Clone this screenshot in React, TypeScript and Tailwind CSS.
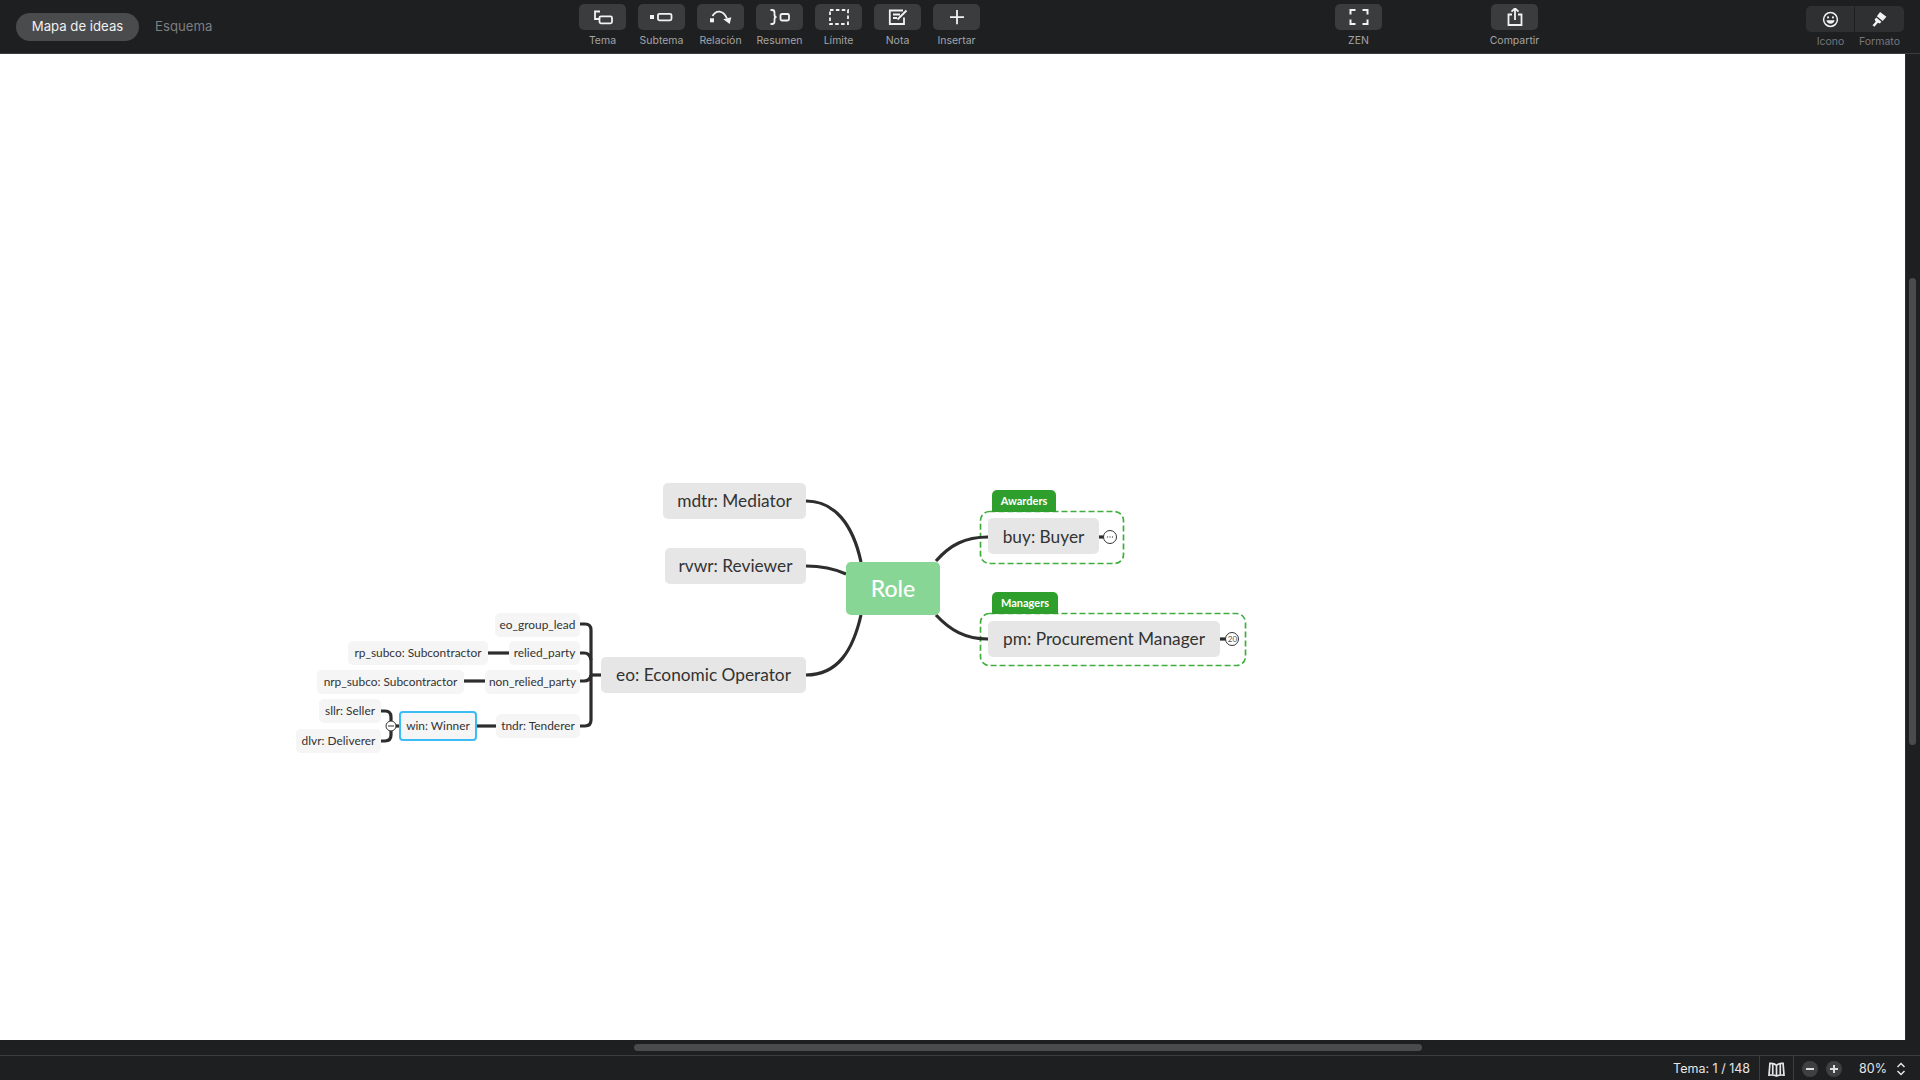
import React from 'react'

const tools = [
  {
    label: 'Tema',
    icon: (
      <>
        <path d="M7 2H2V9.500H6" />
        <rect x="6.500" y="6.800" width="12.500" height="7" rx="1.500" />
      </>
    ),
  },
  {
    label: 'Subtema',
    icon: (
      <>
        <rect x="-2" y="5.500" width="4" height="4" fill="currentColor" stroke="none" />
        <rect x="6" y="4.300" width="13.500" height="6.500" rx="1.500" />
      </>
    ),
  },
  {
    label: 'Relación',
    icon: (
      <>
        <rect x="-1" y="8.800" width="4" height="4" fill="currentColor" stroke="none" />
        <path d="M1.500 6.500C5 0.500 12 0 16 9" />
        <path d="M12.300 9.800L20.300 7.800L18.700 14.500Z" fill="currentColor" stroke="none" />
      </>
    ),
  },
  {
    label: 'Resumen',
    icon: (
      <>
        <path d="M0.500 0.500H2Q4.500 0.500 4.500 3V5.500Q4.500 7.500 6.500 7.500Q4.500 7.500 4.500 9.500V12Q4.500 14.500 2 14.500H0.500" />
        <rect x="10.500" y="4.500" width="8.500" height="6.500" rx="1.500" />
      </>
    ),
  },
  {
    label: 'Límite',
    icon: <rect x="1" y="0.500" width="18" height="14" strokeDasharray="3.500 2.400" />,
  },
  {
    label: 'Nota',
    icon: (
      <>
        <path d="M16 8V14.500H1.800V1H15" />
        <path d="M5 5H12M5 8.500H9M9.500 10L18.500 1" />
      </>
    ),
  },
  {
    label: 'Insertar',
    icon: <path d="M10 0.500V14.800M3 7.600H17" />,
  },
]

function ToolButton({ label, children }: { label: string; children: React.ReactNode }) {
  return (
    <div className="flex w-[59px] flex-col items-center">
      <button className="flex h-[26px] w-[47px] items-center justify-center rounded-[5px] bg-[#3b3c3e] text-[#f2f2f2]">
        <svg width="26" height="18" viewBox="-3 -1.500 26 18" fill="none" stroke="currentColor" strokeWidth="1.800">
          {children}
        </svg>
      </button>
      <span className="mt-[4px] text-[10.500px] leading-[14px] text-[#a3a4a5]">{label}</span>
    </div>
  )
}

function Toolbar() {
  return (
    <header className="flex h-[54px] shrink-0 border-b border-[#3c3d3f] bg-[#1e1f21] pt-[4px] font-['Inter',sans-serif]">
      <div className="flex w-[573px] shrink-0 items-start gap-4 pl-4 pt-[9px] text-[13.200px]">
        <div className="flex h-[28px] w-[123px] items-center justify-center rounded-full bg-[#4a4b4d] text-[#f0f0f0]">
          Mapa de ideas
        </div>
        <div className="flex h-[28px] items-center text-[#7d7e80]">Esquema</div>
      </div>
      {tools.map((t) => (
        <ToolButton key={t.label} label={t.label}>
          {t.icon}
        </ToolButton>
      ))}
      <div className="ml-[343px]">
        <ToolButton label="ZEN">
          <path d="M1.500 5V0.500H6.500M13.500 0.500H18.500V5M18.500 10V14.500H13.500M6.500 14.500H1.500V10" strokeWidth="2" />
        </ToolButton>
      </div>
      <div className="ml-[97px]">
        <ToolButton label="Compartir">
          <path d="M7 5H3.500V15.500H16.500V5H13M10 10.500V-1M6.500 2.200L10 -1.200L13.500 2.200" />
        </ToolButton>
      </div>
      <div className="ml-[262px] mt-[2px] flex w-[98px] flex-col">
        <div className="flex h-[26px] rounded-[5px] bg-[#2f3032] text-[#f2f2f2]">
          <div className="flex w-[49px] items-center justify-center border-r border-[#1e1f21]">
            <svg width="17" height="17" viewBox="0 0 16 16" fill="none" stroke="currentColor" strokeWidth="1.400">
              <circle cx="8" cy="8" r="6.500" />
              <circle cx="5.700" cy="6" r="1" fill="currentColor" stroke="none" />
              <circle cx="10.300" cy="6" r="1" fill="currentColor" stroke="none" />
              <path d="M4.200 8.800H11.800C11.600 11 10 12 8 12C6 12 4.400 11 4.200 8.800Z" fill="currentColor" stroke="none" />
            </svg>
          </div>
          <div className="flex w-[49px] items-center justify-center">
            <svg width="17" height="17" viewBox="0 0 16 16" fill="currentColor">
              <path d="M8.500 1L14.500 5.500L11 9.500L5.500 5Z" />
              <path d="M5 6.200L9.800 10.200L8.400 11.800L6.500 11L3.200 14.800L1.400 13.400L4.400 10L3.400 8Z" />
            </svg>
          </div>
        </div>
        <div className="mt-[3px] flex text-[10.500px] leading-[14px] text-[#77787a]">
          <span className="w-[49px] text-center">Icono</span>
          <span className="w-[49px] whitespace-nowrap text-center">Formato</span>
        </div>
      </div>
    </header>
  )
}

function Connectors() {
  return (
    <svg className="absolute inset-0" width="1905" height="986" viewBox="0 54 1905 986" fill="none">
      <g stroke="#3fae3f" strokeWidth="1.700" strokeDasharray="6 3">
        <rect x="980.500" y="511.500" width="143" height="52" rx="9" />
        <rect x="980.500" y="613.500" width="265" height="52" rx="9" />
      </g>
      <g stroke="#2d2d2d" strokeWidth="3.200">
        <path d="M806 501C835 501 853 525 861 562" />
        <path d="M806 566C822 566 835 569 846 574" />
        <path d="M806 675C838 675 853 650 861 615" />
        <path d="M936 561C950 545 965 537 988 537" />
        <path d="M936 615C950 630 965 639 988 639" />
        <path d="M1099 537H1104" />
        <path d="M1220 639H1226" />
        <path d="M580 624H585Q591 624 591 630V720Q591 726 585 726H580" />
        <path d="M580 653H584Q590 653 591 660" />
        <path d="M580 681H584Q590 681 591 675" />
        <path d="M591 675H601" />
        <path d="M488 653H509" />
        <path d="M464 681H485" />
        <path d="M477 726H496" />
        <path d="M381 711H385Q391 711 391 717V735Q391 741 385 741H381" />
        <path d="M391 726H399" />
      </g>
      <g stroke="#333" strokeWidth="1" fill="#fff">
        <circle cx="1110" cy="537" r="6.500" />
        <circle cx="1232" cy="639" r="6.500" />
        <circle cx="391" cy="726" r="5" />
      </g>
      <path d="M388 726H394" stroke="#333" strokeWidth="1" />
      <g fill="#555">
        <circle cx="1107.500" cy="537" r="0.700" />
        <circle cx="1110" cy="537" r="0.700" />
        <circle cx="1112.500" cy="537" r="0.700" />
      </g>
    </svg>
  )
}

function MindMap() {
  const big = 'absolute flex h-[36px] items-center justify-center rounded-[5px] bg-[#e6e6e6] text-[17.300px]'
  const small = 'absolute flex h-[24px] items-center justify-center rounded-[5px] bg-[#f5f5f5] text-[11.900px]'
  const tag = 'absolute flex h-[22px] items-center justify-center rounded-t-[5px] bg-[#2e9f2c] text-[11px] font-bold text-white'

  return (
    <div className="relative min-h-0 flex-1 overflow-hidden bg-white font-['Lato',sans-serif] text-[#333333]">
      <Connectors />
      <div className={`${big} left-[663px] top-[429px] w-[143px]`}>mdtr: Mediator</div>
      <div className={`${big} left-[665px] top-[494px] w-[141px]`}>rvwr: Reviewer</div>
      <div className={`${big} left-[601px] top-[603px] w-[205px]`}>eo: Economic Operator</div>
      <div className={`${big} left-[988px] top-[464px] w-[111px] pt-[1px]`}>buy: Buyer</div>
      <div className={`${big} left-[988px] top-[567px] w-[232px]`}>pm: Procurement Manager</div>
      <div className="absolute left-[846px] top-[508px] flex h-[53px] w-[94px] items-center justify-center rounded-[5px] bg-[#88d695] pb-[1px] text-[23px] font-medium text-white">
        Role
      </div>
      <div className={`${tag} left-[992px] top-[436px] w-[64px]`}>Awarders</div>
      <div className={`${tag} left-[992px] top-[538px] w-[66px]`}>Managers</div>
      <div className={`${small} left-[495px] top-[559px] w-[85px]`}>eo_group_lead</div>
      <div className={`${small} left-[509px] top-[587px] w-[71px]`}>relied_party</div>
      <div className={`${small} left-[348px] top-[587px] w-[140px]`}>rp_subco: Subcontractor</div>
      <div className={`${small} left-[485px] top-[616px] w-[95px]`}>non_relied_party</div>
      <div className={`${small} left-[317px] top-[616px] w-[147px]`}>nrp_subco: Subcontractor</div>
      <div className={`${small} left-[496px] top-[660px] w-[84px]`}>tndr: Tenderer</div>
      <div className={`${small} left-[319px] top-[645px] w-[62px]`}>sllr: Seller</div>
      <div className={`${small} left-[296px] top-[675px] w-[85px]`}>dlvr: Deliverer</div>
      <div className="absolute left-[399px] top-[657px] flex h-[30px] w-[78px] items-center justify-center rounded-[4px] border-2 border-[#3bbcf5] bg-[#f5f5f5] text-[11.900px]">
        win: Winner
      </div>
      <div className="absolute left-[1226px] top-[578px] flex h-[13px] w-[13px] items-center justify-center text-[8px] text-[#555555]">
        20
      </div>
    </div>
  )
}

function StatusBar() {
  return (
    <footer className="flex h-[25px] shrink-0 items-center border-t border-[#3c3d3f] bg-[#1e1f21] font-['Inter',sans-serif] text-[12.500px] text-[#e6e6e6]">
      <span className="ml-auto mt-[2px] pr-[9px]">Tema: 1 / 148</span>
      <div className="flex h-full w-[35px] items-center justify-center border-x border-[#3c3d3f] pt-[2px]">
        <svg width="17" height="15" viewBox="0 0 18 16" fill="none" stroke="currentColor" strokeWidth="1.800">
          <path d="M9 3.500C7.500 2 5 1.300 2 1.500L1 14C4 13.700 7 14 9 15C11 14 14 13.700 17 14L16 1.500C13 1.300 10.500 2 9 3.500V15" />
          <path d="M5 2V13.500M13 2V13.500" />
        </svg>
      </div>
      <div className="ml-[8px] mt-[2px] flex w-[40px] justify-between">
        <span className="flex h-[16px] w-[16px] items-center justify-center rounded-full bg-[#3f4042]">
          <span className="h-[2px] w-[8px] bg-[#dddddd]" />
        </span>
        <span className="relative flex h-[16px] w-[16px] items-center justify-center rounded-full bg-[#3f4042]">
          <span className="h-[2px] w-[8px] bg-[#dddddd]" />
          <span className="absolute h-[8px] w-[2px] bg-[#dddddd]" />
        </span>
      </div>
      <span className="ml-[17px] mt-[2px]">80%</span>
      <svg className="ml-[9px] mr-[14px] mt-[2px]" width="10" height="14" viewBox="0 0 10 14" fill="none" stroke="currentColor" strokeWidth="1.500">
        <path d="M1.500 5L5 1.500L8.500 5M1.500 9L5 12.500L8.500 9" />
      </svg>
    </footer>
  )
}

export default function App() {
  return (
    <div className="flex h-[1080px] w-[1920px] flex-col overflow-hidden bg-[#1e1f21]">
      <Toolbar />
      <div className="flex min-h-0 flex-1">
        <div className="flex min-w-0 flex-1 flex-col">
          <MindMap />
        </div>
        <div className="w-[15px] shrink-0 border-l border-[#2c2d2f] bg-[#1e1f21] pl-[3px] pt-[224px]">
          <div className="h-[467px] w-[7px] rounded-full bg-[#4a4b4d]" />
        </div>
      </div>
      <div className="h-[15px] w-full shrink-0 bg-[#1e1f21] pl-[634px] pt-[4px]">
        <div className="h-[7px] w-[788px] rounded-full bg-[#4a4b4d]" />
      </div>
      <StatusBar />
    </div>
  )
}
